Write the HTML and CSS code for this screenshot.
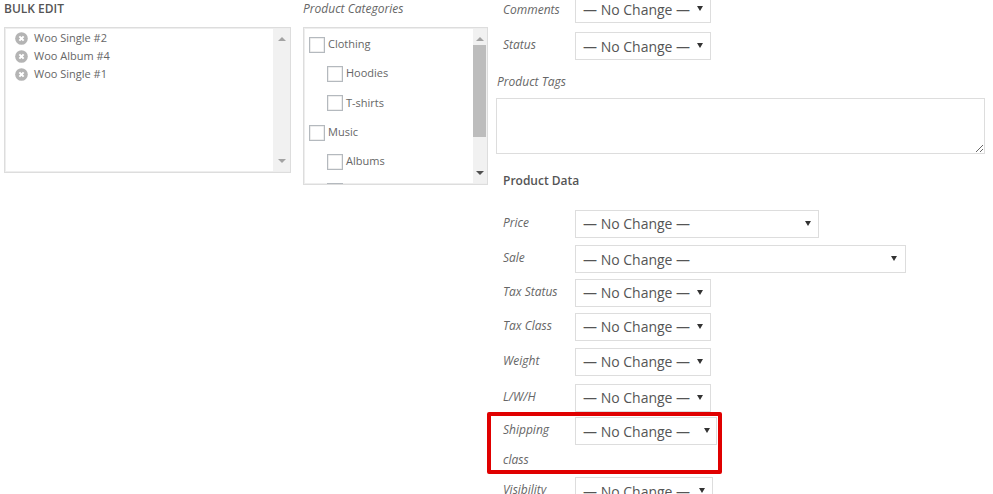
FILE: index.html
```html
<!DOCTYPE html>
<html lang="en">
<head>
<meta charset="utf-8">
<title>Bulk Edit</title>
<link rel="stylesheet" href="styles.css">
</head>
<body>
<main class="page">
  <section class="col-posts">
    <h2 class="title">BULK EDIT</h2>
    <div class="listbox posts">
      <ul class="post-list">
        <li><svg class="remove" viewBox="0 0 14 14"><circle cx="7" cy="7" r="6.8" fill="#b4b4b4"/><path d="M4.7 4.7l4.6 4.6M9.3 4.7l-4.6 4.6" stroke="#fff" stroke-width="2.2"/></svg>Woo Single #2</li>
        <li><svg class="remove" viewBox="0 0 14 14"><circle cx="7" cy="7" r="6.8" fill="#b4b4b4"/><path d="M4.7 4.7l4.6 4.6M9.3 4.7l-4.6 4.6" stroke="#fff" stroke-width="2.2"/></svg>Woo Album #4</li>
        <li><svg class="remove" viewBox="0 0 14 14"><circle cx="7" cy="7" r="6.8" fill="#b4b4b4"/><path d="M4.7 4.7l4.6 4.6M9.3 4.7l-4.6 4.6" stroke="#fff" stroke-width="2.2"/></svg>Woo Single #1</li>
      </ul>
      <div class="scrollbar">
        <span class="sb-up"></span>
        <span class="sb-down"></span>
      </div>
    </div>
  </section>

  <section class="col-cats">
    <div class="cat-title">Product Categories</div>
    <div class="listbox cats">
      <ul class="cat-list">
        <li><span class="check"></span>Clothing</li>
        <li class="child"><span class="check"></span>Hoodies</li>
        <li class="child"><span class="check"></span>T-shirts</li>
        <li><span class="check"></span>Music</li>
        <li class="child"><span class="check"></span>Albums</li>
        <li class="child"><span class="check"></span>Singles</li>
      </ul>
      <div class="scrollbar narrow">
        <span class="sb-up"></span>
        <span class="sb-thumb"></span>
        <span class="sb-down dark"></span>
      </div>
    </div>
  </section>

  <section class="col-fields">
    <div class="row first"><span class="label comments-label">Comments</span><div class="select"><span>— No Change —</span><i class="arrow"></i></div></div>
    <div class="row g9"><span class="label">Status</span><div class="select"><span>— No Change —</span><i class="arrow"></i></div></div>
    <div class="tags-label">Product Tags</div>
    <textarea class="tags" aria-label="Product Tags"></textarea>
    <h3 class="data-title">Product Data</h3>
    <div class="row g0"><span class="label">Price</span><div class="select lift wide-1"><span>— No Change —</span><i class="arrow"></i></div></div>
    <div class="row g7"><span class="label">Sale</span><div class="select wide-2"><span>— No Change —</span><i class="arrow"></i></div></div>
    <div class="row g6"><span class="label">Tax Status</span><div class="select lift"><span>— No Change —</span><i class="arrow"></i></div></div>
    <div class="row g6"><span class="label">Tax Class</span><div class="select lift"><span>— No Change —</span><i class="arrow"></i></div></div>
    <div class="row g7"><span class="label">Weight</span><div class="select lift"><span>— No Change —</span><i class="arrow"></i></div></div>
    <div class="row g8"><span class="label">L/W/H</span><div class="select lift"><span>— No Change —</span><i class="arrow"></i></div></div>
    <div class="row g5 shipping"><span class="label narrow-label">Shipping class</span><div class="select ship"><span>— No Change —</span><i class="arrow"></i></div><div class="highlight"></div></div>
    <div class="row g0 visibility"><span class="label">Visibility</span><div class="select vis"><span>— No Change —</span><i class="arrow"></i></div></div>
  </section>
</main>
</body>
</html>
```
FILE: styles.css
```css
* { box-sizing: border-box; }
html, body { margin: 0; height: 100%; overflow: hidden; background: #fff; }
body { font-family: "Open Sans", sans-serif; font-size: 12px; color: #555; }
ul { list-style: none; margin: 0; padding: 0; }

.page { display: flex; align-items: flex-start; padding-left: 4px; height: 494px; overflow: hidden; }

.col-posts { width: 287px; margin-right: 12px; flex: none; }
.col-cats { width: 185px; margin-right: 8px; flex: none; }
.col-fields { width: 489px; flex: none; margin-top: -5px; }

.title { margin: 0; height: 27px; font-size: 12px; font-weight: 600; line-height: 17px; color: #555; }
.cat-title { height: 27px; line-height: 17px; font-style: italic; color: #666; }

.listbox { display: flex; border: 1px solid #ddd; box-shadow: inset 0 0 0 1px #eee; overflow: hidden; background: #fff; }
.posts { height: 146px; }
.cats { height: 158px; }

.post-list { flex: 1; padding: 1px 0 0 10px; }
.post-list li { display: flex; align-items: center; height: 18px; padding-bottom: 2px; font-size: 11px; color: #666; }
.remove { width: 13px; height: 13px; margin: 2px 6px 0 0; flex: none; }

.scrollbar { position: relative; width: 17px; margin: 1px 0; background: #f1f1f1; flex: none; display: flex; flex-direction: column; justify-content: space-between; align-items: center; padding: 8px 0 8px; }
.scrollbar.narrow { width: 14px; margin-right: 0; padding: 8px 0 20px; }
.sb-up { width: 0; height: 0; border: 4px solid transparent; border-top: 0; border-bottom: 4px solid #a3a3a3; }
.sb-down { width: 0; height: 0; border: 4px solid transparent; border-bottom: 0; border-top: 4px solid #a3a3a3; }
.sb-down.dark { border-top-color: #505050; position: absolute; bottom: 8px; }
.sb-thumb { position: absolute; top: 16px; left: 0; width: 13px; height: 92px; background: #bdbdbd; }

.cat-list { flex: 1; padding: 0 0 0 5px; }
.cat-list li { display: flex; align-items: center; height: 29.3px; padding-bottom: 2px; font-size: 11px; color: #666; }
.cat-list li:first-child { margin-top: 2px; }
.cat-list li.child { padding-left: 18px; }
.check { width: 16px; height: 16px; margin: 2px 3px 0 0; border: 1px solid #b4b9be; box-shadow: inset 0 0 0 0.5px #ddd; background: #fff; flex: none; }

.row { display: flex; align-items: flex-start; padding-left: 7px; }
.label { width: 72px; flex: none; line-height: 26px; font-style: italic; color: #666; }
.comments-label { margin-top: 2px; }
.select { display: flex; align-items: center; justify-content: space-between; width: 136px; height: 28px; padding: 0 7px; border: 1px solid #ddd; font-size: 14px; color: #555; background: #fff; }
.select.lift { padding-bottom: 2px; }
.select span { white-space: nowrap; }
.arrow { width: 0; height: 0; margin-top: -2px; border-left: 3px solid transparent; border-right: 3px solid transparent; border-top: 5px solid #333; }
.select.lift .arrow { margin-top: 0; }
.wide-1 { width: 244px; }
.wide-2 { width: 331px; padding-right: 8px; }
.ship { width: 142px; padding-right: 6px; }
.vis { width: 138px; }

.first { margin-top: 0; }
.g0 { margin-top: 0; }
.g5 { margin-top: 5px; }
.g6 { margin-top: 6px; }
.g7 { margin-top: 7px; }
.g8 { margin-top: 8px; }
.g9 { margin-top: 9px; }

.tags-label { margin-top: 13px; height: 25px; line-height: 18px; padding-left: 1px; font-style: italic; color: #666; }
.tags { display: block; width: 489px; height: 56px; margin: 0; padding: 4px; border: 1px solid #ddd; resize: both; background: #fff; }
.data-title { margin: 0; height: 56px; padding: 18px 0 0 7px; font-size: 12px; font-weight: 600; line-height: 18px; color: #555; }

.shipping { position: relative; height: 60px; }
.narrow-label { line-height: 30px; width: 60px; margin-right: 12px; margin-top: -2px; }
.highlight { position: absolute; left: -9px; top: -5px; width: 235px; height: 62px; border: 4px solid #e00000; border-radius: 2px; pointer-events: none; }
```
